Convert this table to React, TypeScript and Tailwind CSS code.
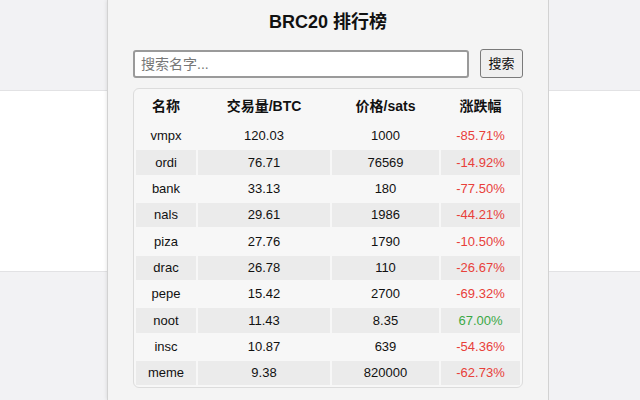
import type { JSX } from "react";

// BRC20 ranking popup over a dimmed page
const rows = [
  { name: "vmpx", vol: "120.03", price: "1000", change: "-85.71%" },
  { name: "ordi", vol: "76.71", price: "76569", change: "-14.92%" },
  { name: "bank", vol: "33.13", price: "180", change: "-77.50%" },
  { name: "nals", vol: "29.61", price: "1986", change: "-44.21%" },
  { name: "piza", vol: "27.76", price: "1790", change: "-10.50%" },
  { name: "drac", vol: "26.78", price: "110", change: "-26.67%" },
  { name: "pepe", vol: "15.42", price: "2700", change: "-69.32%" },
  { name: "noot", vol: "11.43", price: "8.35", change: "67.00%" },
  { name: "insc", vol: "10.87", price: "639", change: "-54.36%" },
  { name: "meme", vol: "9.38", price: "820000", change: "-62.73%" },
];

function SideBand({ className }: { className: string }): JSX.Element {
  return (
    <div className={`flex flex-col ${className}`}>
      <div className="h-[91px] bg-[#f2f2f4] border-b border-[#e2e2e4]" />
      <div className="h-[180px] bg-white" />
      <div className="flex-1 bg-[#f2f2f4] border-t border-[#e2e2e4]" />
    </div>
  );
}

export default function App(): JSX.Element {
  return (
    <div
      className="flex h-[400px] w-[640px] overflow-hidden text-[#111]"
      style={{ fontFamily: '"Liberation Sans", "Noto Sans CJK SC", sans-serif' }}
    >
      <SideBand className="w-[107px]" />

      <div className="w-[442px] shrink-0 border-x border-[#d2d2d2] bg-[#f4f4f4] px-[25px] shadow-[0_0_4px_rgba(0,0,0,0.12)]">
        <h1 className="pt-[10px] text-center text-[18px] font-bold leading-[24px]">BRC20 排行榜</h1>

        {/* Search */}
        <div className="mt-[15px] flex items-center gap-[11px]">
          <input
            className="h-[28px] flex-1 rounded-[3px] border-2 border-[#9a9a9a] bg-white px-[6px] text-[14px] placeholder:text-[#777] outline-none"
            placeholder="搜索名字..."
          />
          <button className="h-[29px] w-[43px] rounded-[3px] border border-[#7a7a7a] bg-[#efefef] text-[13px]">
            搜索
          </button>
        </div>

        {/* Ranking table */}
        <div className="mt-[10px] rounded-[6px] border border-[#dcdcdc] bg-[#f7f7f7]">
          <table className="w-full table-fixed border-separate border-spacing-[2px] text-center text-[13px]">
            <colgroup>
              <col className="w-[60px]" />
              <col className="w-[132px]" />
              <col className="w-[107px]" />
              <col className="w-[79px]" />
            </colgroup>
            <thead>
              <tr className="h-[31px] text-[14px] font-bold">
                <th>名称</th>
                <th>交易量/BTC</th>
                <th>价格/sats</th>
                <th>涨跌幅</th>
              </tr>
            </thead>
            <tbody>
              {rows.map((r, i) => (
                <tr key={r.name} className={`h-[24.33px] ${i % 2 === 1 ? "bg-[#ebebeb]" : ""}`}>
                  <td>{r.name}</td>
                  <td>{r.vol}</td>
                  <td>{r.price}</td>
                  <td className={r.change.startsWith("-") ? "text-[#e8403a]" : "text-[#3aa845]"}>
                    {r.change}
                  </td>
                </tr>
              ))}
            </tbody>
          </table>
        </div>
      </div>

      <SideBand className="flex-1" />
    </div>
  );
}
